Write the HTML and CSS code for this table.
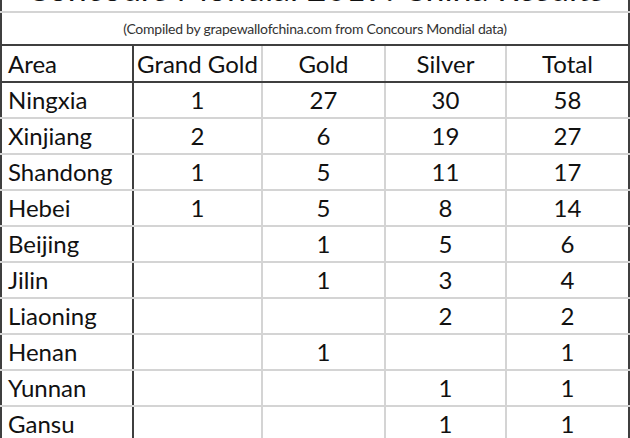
FILE: index.html
```html
<!DOCTYPE html>
<html lang="en">
<head>
<meta charset="utf-8">
<title>Concours Mondial 2019: China Results</title>
<link rel="stylesheet" href="styles.css">
</head>
<body>
<table class="medals">
  <colgroup>
    <col class="c-area"><col class="c-gg"><col class="c-g"><col class="c-s"><col class="c-t">
  </colgroup>
  <thead>
    <tr class="title-row"><th colspan="5">Concours Mondial 2019: China Results</th></tr>
    <tr class="sub-row"><td colspan="5">(Compiled by grapewallofchina.com from Concours Mondial data)</td></tr>
    <tr class="head-row"><th>Area</th><th>Grand Gold</th><th>Gold</th><th>Silver</th><th>Total</th></tr>
  </thead>
  <tbody>
    <tr><td>Ningxia</td><td>1</td><td>27</td><td>30</td><td>58</td></tr>
    <tr><td>Xinjiang</td><td>2</td><td>6</td><td>19</td><td>27</td></tr>
    <tr><td>Shandong</td><td>1</td><td>5</td><td>11</td><td>17</td></tr>
    <tr><td>Hebei</td><td>1</td><td>5</td><td>8</td><td>14</td></tr>
    <tr><td>Beijing</td><td></td><td>1</td><td>5</td><td>6</td></tr>
    <tr><td>Jilin</td><td></td><td>1</td><td>3</td><td>4</td></tr>
    <tr><td>Liaoning</td><td></td><td></td><td>2</td><td>2</td></tr>
    <tr><td>Henan</td><td></td><td>1</td><td></td><td>1</td></tr>
    <tr><td>Yunnan</td><td></td><td></td><td>1</td><td>1</td></tr>
    <tr><td>Gansu</td><td></td><td></td><td>1</td><td>1</td></tr>
  </tbody>
</table>
</body>
</html>
```

FILE: styles.css
```css
html, body {
  margin: 0;
  padding: 0;
  background: #ffffff;
  overflow: hidden;
}

.medals {
  border-collapse: collapse;
  table-layout: fixed;
  width: 630px;
  margin-top: -45px;
  font-family: Lato, "Liberation Sans", sans-serif;
  color: #111111;
}

.c-area { width: 132px; }
.c-gg { width: 129px; }
.c-g { width: 123px; }
.c-s { width: 121px; }
.c-t { width: 123px; }

.medals th,
.medals td {
  border: 2px solid #d4d4d4;
  padding: 0;
  font-weight: 400;
  text-align: center;
  font-size: 24px;
  height: 34px;
  line-height: 1;
  white-space: nowrap;
  overflow: hidden;
}

.medals tr > :first-child { border-left-color: #3f3f3f; }
.medals tr > :last-child { border-right-color: #3f3f3f; }

.medals td:first-child,
.head-row th:first-child {
  text-align: left;
  padding-left: 6px;
  border-right-color: #3f3f3f;
}

.title-row th {
  font-size: 34px;
  height: 48px;
  vertical-align: bottom;
  padding: 0 0 6px 0;
  text-align: center;
}

.sub-row td {
  font-size: 14px;
  letter-spacing: -0.25px;
  color: #333333;
  height: 31px;
  border-bottom-color: #3f3f3f;
  text-align: center;
  padding: 0;
}

.sub-row td:first-child {
  text-align: center;
  padding: 0;
}

.head-row th {
  height: 35px;
  border-bottom-color: #3f3f3f;
}
```
